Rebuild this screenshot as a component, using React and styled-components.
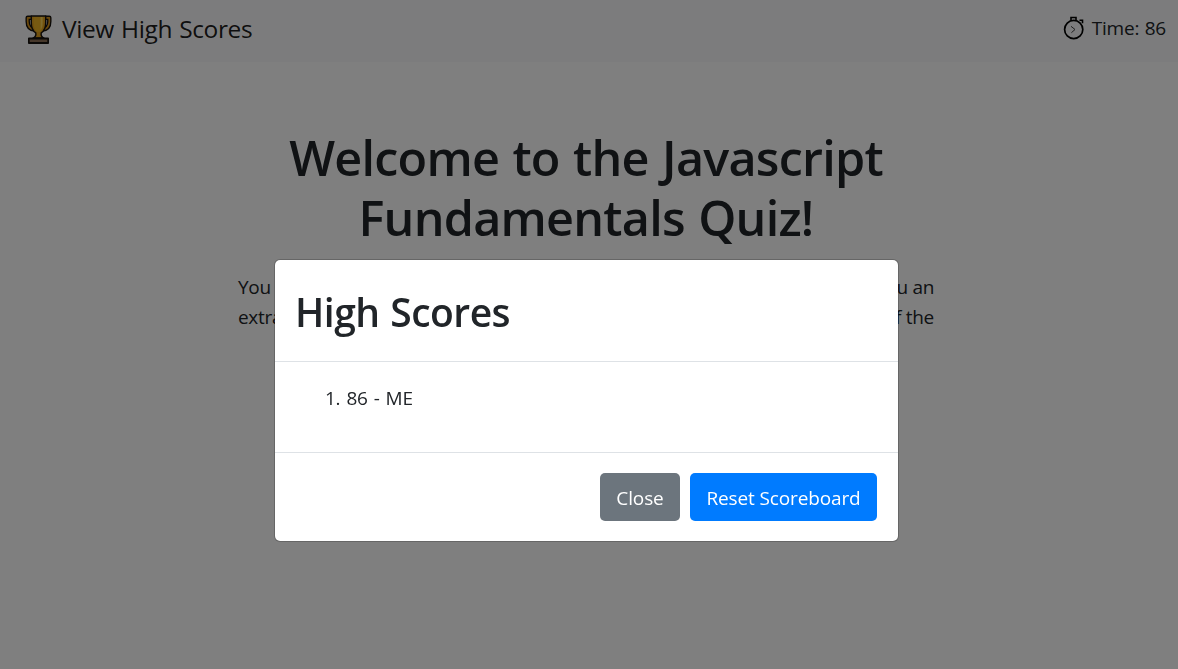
import React from "react";
import styled, { createGlobalStyle } from "styled-components";

const GlobalStyle = createGlobalStyle`
  *, *::before, *::after { box-sizing: border-box; }
  html, body, #root { height: 100%; }
  body {
    margin: 0;
    overflow: hidden;
    background: #fff;
    color: #212529;
    font-family: "Segoe UI", "Open Sans", "Noto Sans", sans-serif;
    font-size: 19px;
    line-height: 30px;
  }
`;

const Navbar = styled.nav`
  display: flex;
  justify-content: space-between;
  height: 62px;
  padding: 0 12px 0 25px;
  background: #f8f9fa;
`;

const Brand = styled.a`
  display: flex;
  height: 58px;
  align-items: center;
  gap: 10px;
  color: rgba(0, 0, 0, 0.9);
  font-size: 24.5px;
  letter-spacing: -0.4px;
  word-spacing: 1.2px;
  white-space: nowrap;
`;

const Timer = styled.div`
  display: flex;
  height: 56px;
  align-items: center;
  gap: 6.5px;
  font-size: 19px;
  letter-spacing: -0.2px;
  word-spacing: 0.7px;
  white-space: nowrap;
`;

const Main = styled.main`
  width: 696px;
  margin: 65px 0 0 238px;
`;

const Title = styled.h1`
  margin: 0 0 25px;
  font-size: 48.5px;
  font-weight: 600;
  line-height: 60px;
  letter-spacing: -0.75px;
  word-spacing: 1.5px;
  text-align: center;
  white-space: nowrap;
`;

const IntroLine = styled.p`
  display: flex;
  justify-content: space-between;
  margin: 0;
  letter-spacing: -0.3px;
`;

const Backdrop = styled.div`
  position: fixed;
  inset: 0;
  display: flex;
  align-items: flex-start;
  padding: 259px 0 0 274px;
  background: rgba(0, 0, 0, 0.5);
`;

const Dialog = styled.section`
  width: 625px;
  height: 283px;
  background: #fff;
  background-clip: padding-box;
  border: 1px solid rgba(0, 0, 0, 0.2);
  border-radius: 6px;
`;

const DialogHeader = styled.header`
  height: 102px;
  padding: 22px 20px 0 20px;
  border-bottom: 1px solid #dee2e6;
`;

const DialogTitle = styled.h2`
  margin: 0;
  font-size: 39px;
  font-weight: 600;
  line-height: 60px;
  letter-spacing: -0.5px;
  word-spacing: 1px;
`;

const DialogBody = styled.div`
  height: 90px;
  padding: 21px 20px 0 50px;
`;

const Score = styled.div`
  letter-spacing: -0.3px;
  word-spacing: 1.5px;
`;

const DialogFooter = styled.footer`
  display: flex;
  justify-content: flex-end;
  gap: 10px;
  padding: 20px 21px;
  border-top: 1px solid #dee2e6;
`;

const Button = styled.button`
  width: ${(p) => p.$width}px;
  height: 48px;
  padding: 1px 0 0;
  border: 0;
  border-radius: 5px;
  background: ${(p) => (p.$primary ? "#007bff" : "#6c757d")};
  color: #fff;
  font: inherit;
  letter-spacing: -0.13px;
  white-space: nowrap;
`;

function Trophy() {
  return (
    <svg width="27" height="30" viewBox="0 0 28 30" preserveAspectRatio="none">
      <g fill="none" strokeLinejoin="round">
        <path d="M7 3.8H2.8v3.7c0 4.7 2.2 7.5 7 8M21 3.8h4.2v3.7c0 4.7-2.2 7.5-7 8" stroke="#17130f" strokeWidth="4.6" />
        <path d="M7 3.8H2.8v3.7c0 4.7 2.2 7.5 7 8M21 3.8h4.2v3.7c0 4.7-2.2 7.5-7 8" stroke="#d8941b" strokeWidth="1.8" />
        <path d="M6.5 2h15v6.5c0 5.2-1.8 8.6-4.7 10.3-.5 2.6.4 4.2 3 5.3H8.2c2.6-1.1 3.5-2.7 3-5.3-2.9-1.7-4.7-5.1-4.7-10.3z" fill="#e2a01d" stroke="#17130f" strokeWidth="1.5" />
      </g>
      <path d="M9 3h10v6c0 4-1 6.8-3.3 8.8h-3.4C10 15.8 9 13 9 9z" fill="#efb323" />
      <path d="M16.2 3h2v6c0 3-.6 5.3-2 7z" fill="#ffd65a" />
      <path d="M4 24.5h20V29H4z" fill="#8d6e55" stroke="#17130f" strokeWidth="1.8" strokeLinejoin="round" />
    </svg>
  );
}

function Stopwatch() {
  return (
    <svg width="22" height="24" viewBox="0 0 22 24" fill="none" stroke="#000">
      <path d="M8 4.5V1.5h5v3M16.5 4.2h3v3" strokeWidth="1.6" />
      <circle cx="10.7" cy="13.5" r="9.1" strokeWidth="1.7" />
      <path d="m8 10.3 4 3.2-3.6 3.2" stroke="#444" strokeWidth="1" />
    </svg>
  );
}

export default function App() {
  return (
    <>
      <GlobalStyle />
      <Navbar>
        <Brand><Trophy />View High Scores</Brand>
        <Timer><Stopwatch />Time: 86</Timer>
      </Navbar>
      <Main>
        <Title>Welcome to the Javascript<br />Fundamentals Quiz!</Title>
        <IntroLine><span>You</span><span>you an</span></IntroLine>
        <IntroLine><span>extra</span><span>of the</span></IntroLine>
      </Main>
      <Backdrop>
        <Dialog role="dialog">
          <DialogHeader><DialogTitle>High Scores</DialogTitle></DialogHeader>
          <DialogBody><Score>1. 86 - ME</Score></DialogBody>
          <DialogFooter>
            <Button $width={80}>Close</Button>
            <Button $width={187} $primary>Reset Scoreboard</Button>
          </DialogFooter>
        </Dialog>
      </Backdrop>
    </>
  );
}
